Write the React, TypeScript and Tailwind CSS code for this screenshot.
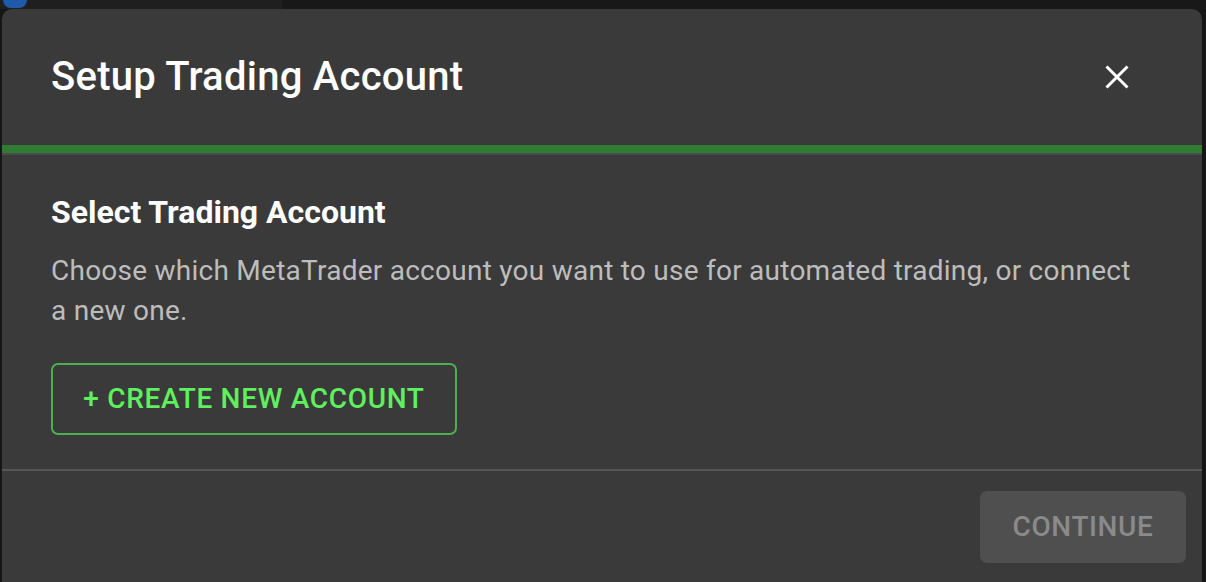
import React from 'react';

const CloseIcon: React.FC = () => (
  <svg width="24" height="24" viewBox="0 0 24 24" fill="none" stroke="currentColor" strokeWidth="3" strokeLinecap="butt">
    <path d="M1.5 1.5l21 21M22.5 1.5l-21 21" />
  </svg>
);

const App: React.FC = () => {
  return (
    <div className="relative w-[1206px] h-[582px] overflow-hidden bg-[#161616]" style={{ fontFamily: 'Roboto, "Liberation Sans", sans-serif' }}>
      {/* page behind the dialog */}
      <div className="flex h-[9px]">
        <div className="w-[282px] bg-[#1f1f1f] pl-[3px]">
          <div className="h-[8px] w-[24px] rounded-b-full bg-[#1e5aa8]" />
        </div>
        <div className="flex-1 bg-[#181818]" />
      </div>

      <div className="absolute left-[2px] top-[9px] w-[1200px] h-[600px] rounded-[10px] bg-[#3a3a3a] text-white">
        <div className="flex h-[136px] items-center justify-between pl-[49px] pr-[73px]">
          <h1 className="text-[40px] font-medium tracking-[0.25px]">Setup Trading Account</h1>
          <button className="text-white">
            <CloseIcon />
          </button>
        </div>
        <div className="h-[8px] bg-[#2e7d32]" />
        <div className="h-[2px] bg-[#4a4a4a]" />

        <div className="px-[49px] pt-[38px] pb-[34px]">
          <h2 className="text-[32px] font-bold leading-[38px]">Select Trading Account</h2>
          <p className="mt-[20px] pr-[13px] text-[28px] leading-[40px] tracking-[0.25px] text-[#bdbdbd]">
            Choose which MetaTrader account you want to use for automated trading, or connect a new one.
          </p>
          <button className="mt-[32px] flex h-[72px] w-[406px] items-center justify-center rounded-[7px] border-2 border-[#4caf50] text-[28px] font-medium tracking-[0.7px] text-[#5ef05e]">
            + CREATE NEW ACCOUNT
          </button>
        </div>

        <div className="h-[2px] bg-[#555555]" />
        <div className="flex justify-end pt-[20px] pr-[16px]">
          <button className="flex h-[72px] w-[206px] items-center justify-center rounded-[7px] bg-[#4f4f4f] text-[28px] font-medium tracking-[0.6px] text-[#8a8a8a]">
            CONTINUE
          </button>
        </div>
      </div>
    </div>
  );
};

export default App;
